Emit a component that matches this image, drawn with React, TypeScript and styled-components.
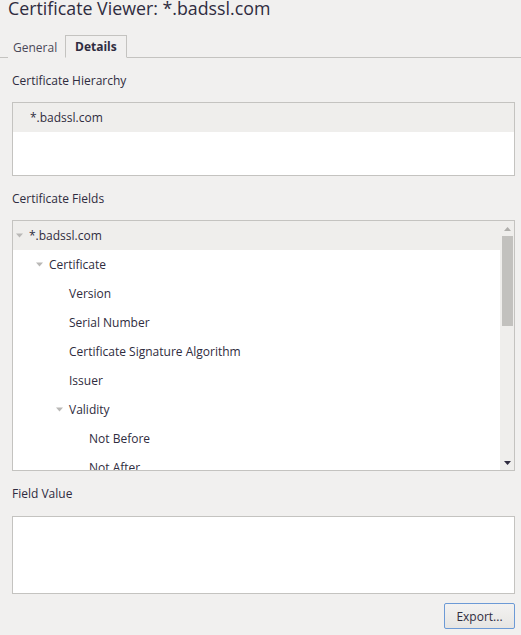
import React from "react";
import styled, { createGlobalStyle } from "styled-components";

const Global = createGlobalStyle`
  html, body { margin: 0; padding: 0; background: #f1f0ef; }
  body { font-family: "Open Sans", "Noto Sans", sans-serif; color: #2f2c40; }
  * { box-sizing: border-box; }
`;

const Window = styled.div`
  width: 521px;
  height: 635px;
  display: flex;
  flex-direction: column;
  background: #f1f0ef;
  overflow: hidden;
`;

const Title = styled.div`
  height: 23px;
  padding-left: 8px;
  font-size: 17.8px;
  line-height: 17px;
  color: #2f2c40;
  white-space: nowrap;
`;

const TabBar = styled.div`
  margin-top: 12px;
  height: 23px;
  display: flex;
  align-items: flex-end;
  padding-left: 8px;
  border-bottom: 1px solid #c4c3c0;
`;

const Tab = styled.div<{ $active?: boolean }>`
  height: ${(p) => (p.$active ? "23px" : "22px")};
  margin-bottom: -1px;
  padding: 0 ${(p) => (p.$active ? "9px" : "4px")};
  display: flex;
  align-items: center;
  font-size: 12px;
  font-weight: ${(p) => (p.$active ? 700 : 400)};
  color: ${(p) => (p.$active ? "#2f2c40" : "#4a4858")};
  background: #f1f0ef;
  border: ${(p) => (p.$active ? "1px solid #c4c3c0" : "1px solid transparent")};
  border-bottom: ${(p) => (p.$active ? "1px solid #f1f0ef" : "none")};
  min-width: ${(p) => (p.$active ? "60px" : "57px")};
`;

const Content = styled.div`
  display: flex;
  flex-direction: column;
  padding: 0 6px 0 12px;
`;

const Label = styled.div<{ $h: number }>`
  height: ${(p) => p.$h}px;
  display: flex;
  align-items: center;
  font-size: 12px;
  color: #2f2c40;
`;

const Box = styled.div<{ $h: number }>`
  height: ${(p) => p.$h}px;
  background: #ffffff;
  border: 1px solid #c4c3c0;
  display: flex;
  overflow: hidden;
`;

const List = styled.div`
  flex: 1;
  display: flex;
  flex-direction: column;
  overflow: hidden;
`;

const Row = styled.div<{ $sel?: boolean; $level: number; $indent?: number }>`
  height: 29px;
  flex-shrink: 0;
  display: flex;
  align-items: center;
  gap: 6px;
  padding-left: ${(p) => 3 + p.$level * 20 + (p.$indent ?? 0)}px;
  background: ${(p) => (p.$sel ? "#efeeec" : "#ffffff")};
  font-size: 12px;
  color: #2f2c40;
  white-space: nowrap;
`;

const Spacer = styled.span`
  width: 7px;
  flex-shrink: 0;
`;

const Expander = () => (
  <svg width="7" height="5" viewBox="0 0 7 5" style={{ flexShrink: 0 }}>
    <path d="M0 0.5 L7 0.5 L3.5 4.5 Z" fill="#b9b8b6" />
  </svg>
);

const ScrollTrack = styled.div`
  width: 14px;
  flex-shrink: 0;
  background: #efeeec;
  display: flex;
  flex-direction: column;
  align-items: center;
`;

const ArrowBox = styled.div`
  height: 15px;
  display: flex;
  align-items: center;
  justify-content: center;
`;

const Thumb = styled.div`
  width: 11px;
  height: 90px;
  background: #c2c1be;
`;

const TrackFill = styled.div`
  flex: 1;
`;

const Footer = styled.div`
  display: flex;
  justify-content: flex-end;
  padding-top: 9px;
`;

const Button = styled.button`
  width: 71px;
  height: 26px;
  border: 1px solid #6c9ad6;
  border-radius: 2px;
  background: linear-gradient(#f3f2f1, #e6e5e3);
  font-family: "Open Sans", "Noto Sans", sans-serif;
  font-size: 12px;
  color: #2f2c40;
  padding: 0;
`;

type Item = { text: string; level: number; expander?: boolean; sel?: boolean };

const fields: Item[] = [
  { text: "*.badssl.com", level: 0, expander: true, sel: true },
  { text: "Certificate", level: 1, expander: true },
  { text: "Version", level: 2 },
  { text: "Serial Number", level: 2 },
  { text: "Certificate Signature Algorithm", level: 2 },
  { text: "Issuer", level: 2 },
  { text: "Validity", level: 2, expander: true },
  { text: "Not Before", level: 3 },
  { text: "Not After", level: 3 },
];

export default function App() {
  return (
    <Window>
      <Global />
      <Title>Certificate Viewer: *.badssl.com</Title>
      <TabBar>
        <Tab>General</Tab>
        <Tab $active>Details</Tab>
      </TabBar>
      <Content>
        <Label $h={44}>Certificate Hierarchy</Label>
        <Box $h={74}>
          <List>
            <Row $sel $level={0} $indent={1}>
              <Spacer />
              <span>*.badssl.com</span>
            </Row>
          </List>
        </Box>
        <Label $h={44}>Certificate Fields</Label>
        <Box $h={251}>
          <List>
            {fields.map((f, i) => (
              <Row key={i} $sel={f.sel} $level={f.level}>
                {f.expander ? <Expander /> : <Spacer />}
                <span>{f.text}</span>
              </Row>
            ))}
          </List>
          <ScrollTrack>
            <ArrowBox>
              <svg width="7" height="4" viewBox="0 0 7 4">
                <path d="M0 4 L7 4 L3.5 0 Z" fill="#b0afac" />
              </svg>
            </ArrowBox>
            <Thumb />
            <TrackFill />
            <ArrowBox>
              <svg width="7" height="4" viewBox="0 0 7 4">
                <path d="M0 0 L7 0 L3.5 4 Z" fill="#2f2c40" />
              </svg>
            </ArrowBox>
          </ScrollTrack>
        </Box>
        <Label $h={45}>Field Value</Label>
        <Box $h={78} />
        <Footer>
          <Button>Export...</Button>
        </Footer>
      </Content>
    </Window>
  );
}
